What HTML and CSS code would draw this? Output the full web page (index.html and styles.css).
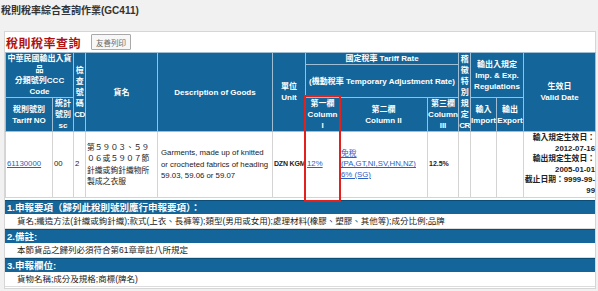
FILE: index.html
```html
<!DOCTYPE html>
<html lang="zh-Hant">
<head>
    <meta charset="UTF-8">
    <meta name="viewport" content="width=device-width, initial-scale=1.0">
    <title>稅則稅率綜合查詢作業(GC411)</title>
    <link rel="stylesheet" href="styles.css">
</head>
<body>
    <h1 class="page-title">稅則稅率綜合查詢作業(GC411)</h1>

    <div class="panel">
        <div class="panel-head">
            <h2 class="query-title">稅則稅率查詢</h2>
            <button class="print-btn">友善列印</button>
        </div>

        <!-- Tariff rate table -->
        <div class="rate-wrap">
            <table class="rate-table">
                <colgroup>
                    <col style="width: 47px">
                    <col style="width: 21px">
                    <col style="width: 12px">
                    <col style="width: 72px">
                    <col style="width: 115px">
                    <col style="width: 33px">
                    <col style="width: 34px">
                    <col style="width: 88px">
                    <col style="width: 31px">
                    <col style="width: 12px">
                    <col style="width: 26px">
                    <col style="width: 27px">
                    <col style="width: 72px">
                </colgroup>
                <thead>
                    <tr class="row-a">
                        <th colspan="2" rowspan="2">中華民國輸出入貨品<br>分類號列CCC Code</th>
                        <th rowspan="3" class="narrow">檢查號碼CD</th>
                        <th rowspan="3">貨名</th>
                        <th rowspan="3">Description of Goods</th>
                        <th rowspan="3">單位<br>Unit</th>
                        <th colspan="3">國定稅率 Tariff Rate</th>
                        <th rowspan="3" class="narrow">稽徵特別規定CR</th>
                        <th colspan="2" rowspan="2">輸出入規定<br>Imp. &amp; Exp.<br>Regulations</th>
                        <th rowspan="3">生效日<br>Valid Date</th>
                    </tr>
                    <tr>
                        <th colspan="3">(機動稅率 Temporary Adjustment Rate)</th>
                    </tr>
                    <tr class="row-c">
                        <th>稅則號別<br>Tariff NO</th>
                        <th>統計<br>號別<br>sc</th>
                        <th>第一欄<br>Column<br>I</th>
                        <th>第二欄<br>Column II</th>
                        <th>第三欄<br>Column<br>III</th>
                        <th>輸入<br>Import</th>
                        <th>輸出<br>Export</th>
                    </tr>
                </thead>
                <tbody>
                    <tr>
                        <td><a href="#">61130000</a></td>
                        <td>00</td>
                        <td>2</td>
                        <td class="goods">第５９０３、５９０６或５９０７節針織或鉤針織物所製成之衣服</td>
                        <td class="desc">Garments, made up of knitted or crocheted fabrics of heading 59.03, 59.06 or 59.07</td>
                        <td class="unit">DZN KGM</td>
                        <td><a href="#">12%</a></td>
                        <td><a href="#">免稅<br>(PA,GT,NI,SV,HN,NZ)<br>6% (SG)</a></td>
                        <td class="rate3">12.5%</td>
                        <td></td>
                        <td></td>
                        <td></td>
                        <td class="valid">輸入規定生效日：<br>2012-07-16<br>輸出規定生效日：<br>2005-01-01<br>截止日期：<span class="nowrap">9999-99-</span><wbr>99</td>
                    </tr>
                </tbody>
            </table>
            <div class="mark"></div>
        </div>

        <!-- Declaration notes -->
        <div class="info">
            <div class="info-bar">1.申報要項（歸列此稅則號別應行申報要項）：</div>
            <div class="info-row">貨名;纖造方法(針織或鉤針織);款式(上衣、長褲等);類型(男用或女用);處理材料(橡膠、塑膠、其他等);成分比例;品牌</div>
            <div class="info-bar">2.備註:</div>
            <div class="info-row">本節貨品之歸列必須符合第61章章註八所規定</div>
            <div class="info-bar">3.申報欄位:</div>
            <div class="info-row">貨物名稱;成分及規格;商標(牌名)</div>
        </div>
    </div>
</body>
</html>
```

FILE: styles.css
```css
/* Global */
body {
    margin: 0;
    background-color: #f1f1f1;
    font-family: "Liberation Sans", "Noto Sans CJK TC", sans-serif;
    color: #222;
}

.page-title {
    margin: 0;
    height: 31px;
    padding: 4px 1px 0;
    box-sizing: border-box;
    font-size: 10px;
    line-height: 14px;
    font-weight: bold;
    color: #333;
}

.panel {
    margin: 0 2px 0 4px;
    background: #fff;
    border: 1px solid #d6d6d6;
    padding-bottom: 1px;
}

.panel-head {
    display: flex;
    align-items: center;
    gap: 10px;
    height: 20px;
    padding-left: 1px;
}

.query-title {
    margin: 0;
    font-size: 12px;
    letter-spacing: 0.5px;
    color: #b0100f;
}

.print-btn {
    height: 16px;
    padding: 0 4px;
    border: 1px solid #a9a9a9;
    border-radius: 1px;
    background: #f7f7f7;
    font-family: inherit;
    font-size: 7.5px;
    color: #666;
}

/* Rate table */
.rate-wrap {
    position: relative;
}

.rate-table {
    width: 590px;
    table-layout: fixed;
    border-collapse: collapse;
}

.rate-table th {
    background: #146599;
    color: #fff;
    font-size: 8px;
    line-height: 11px;
    font-weight: bold;
    padding: 0;
    border: 1px solid #9fbdd3;
    text-align: center;
    vertical-align: middle;
}

.rate-table th.narrow {
    letter-spacing: -0.6px;
    word-break: break-all;
}

.rate-table .row-a th {
    height: 9px;
}

.rate-table td {
    font-size: 7.8px;
    line-height: 10.5px;
    padding: 1px 1px;
    border: 1px solid #d4d4d4;
    vertical-align: middle;
    text-align: left;
    word-wrap: break-word;
}

.rate-table a {
    color: #2b5fc2;
}

.rate-table td.goods {
    line-height: 11.5px;
}

.rate-table td.desc {
    padding-left: 3px;
    line-height: 11.5px;
}

.rate-table td.unit {
    white-space: nowrap;
    font-size: 7px;
    font-weight: bold;
    letter-spacing: -0.2px;
}

.rate-table td.rate3 {
    font-weight: bold;
    font-size: 7px;
}

.rate-table td.valid {
    text-align: right;
    font-weight: bold;
    padding: 1px 0;
}

.nowrap {
    white-space: nowrap;
}

/* red highlight around Column I */
.mark {
    position: absolute;
    left: 299px;
    top: 43px;
    width: 33px;
    height: 103px;
    border: 2px solid #e3211c;
}

/* Notes */
.info {
    margin-top: 2px;
}

.info-bar {
    background: #146599;
    color: #fff;
    font-weight: bold;
    font-size: 9.5px;
    line-height: 13px;
    padding-left: 2px;
    border-top: 1px solid #0c4d78;
}

.info-row {
    font-size: 8.5px;
    line-height: 14px;
    padding-left: 12px;
    border-bottom: 1px solid #dcdcdc;
}
```
